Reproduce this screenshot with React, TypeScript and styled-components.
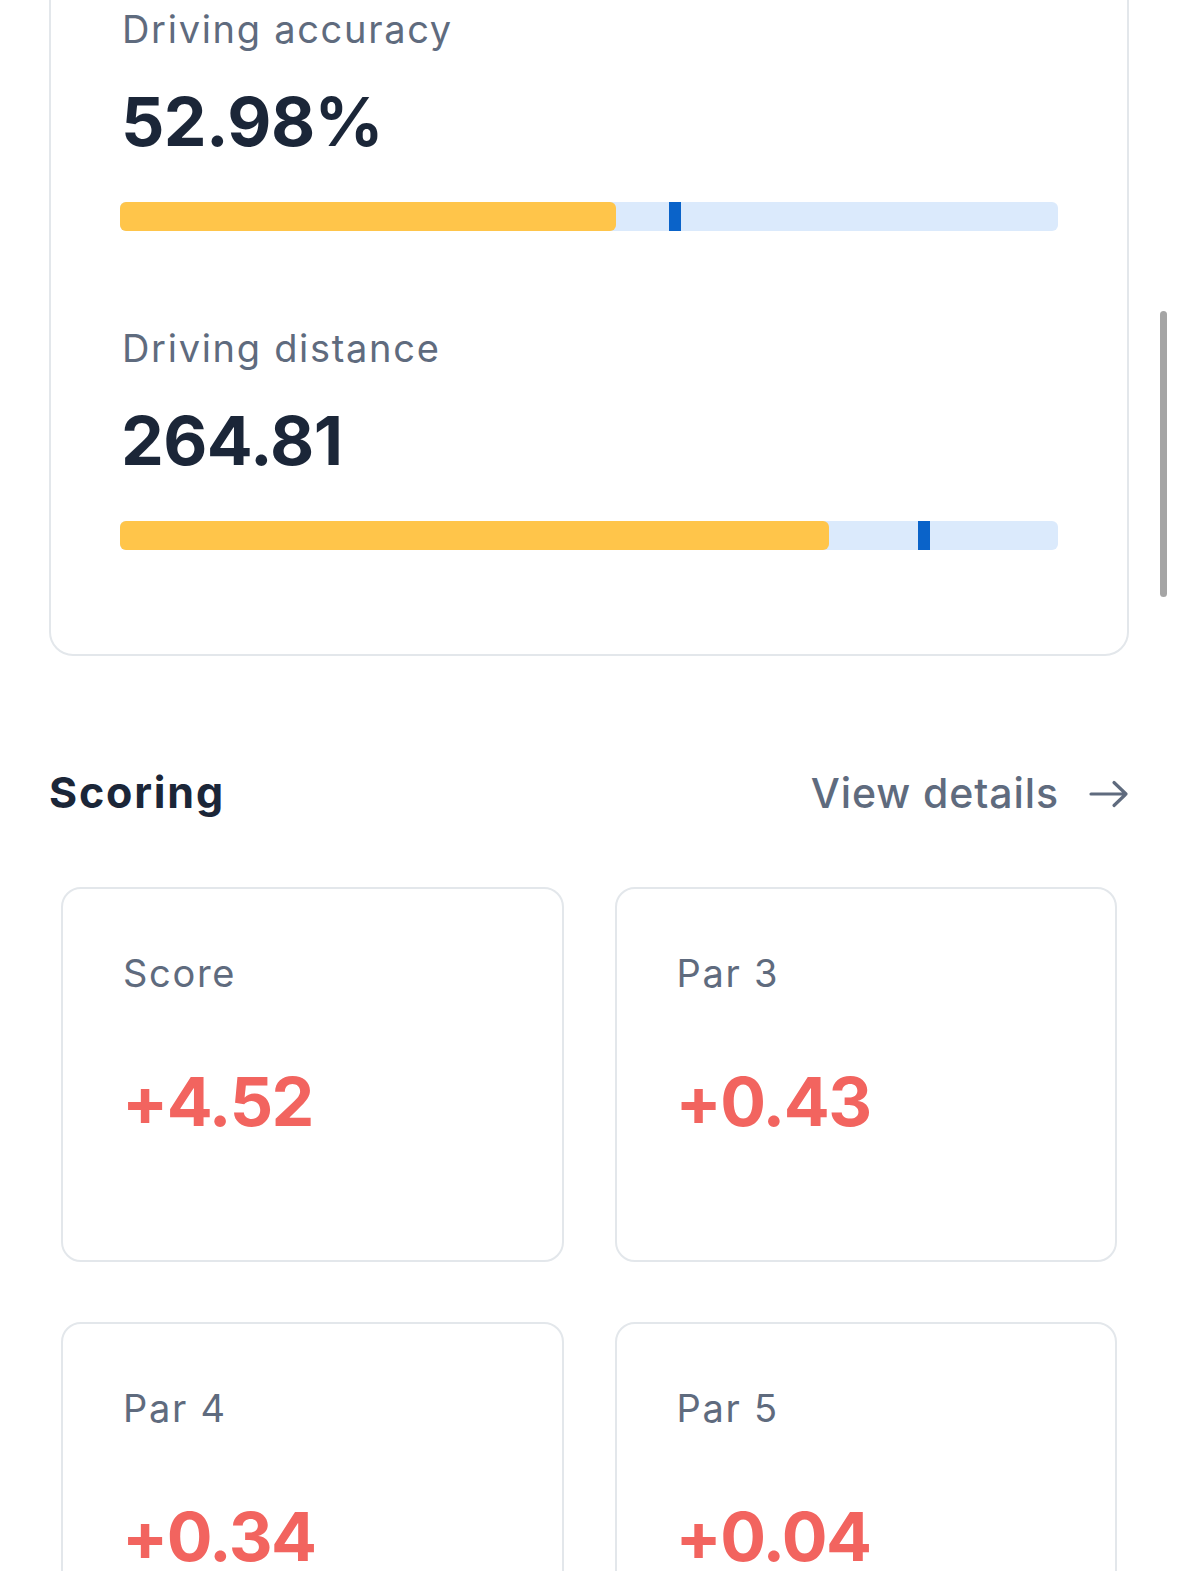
import React from 'react';
import styled, { createGlobalStyle } from 'styled-components';

const GlobalStyle = createGlobalStyle`
    html, body {
        margin: 0;
        padding: 0;
        background: #ffffff;
        font-family: Inter, 'Open Sans', 'Liberation Sans', sans-serif;
        color: #1b2638;
        overflow: hidden;
    }
`;

const Page = styled.div`
    padding: 0 50px 0 49px;
    height: 1571px;
    overflow: hidden;
`;

const StatsCard = styled.section`
    margin-top: -56px;
    border: 2px solid #e3e7eb;
    border-radius: 24px;
    padding: 60px 69px 104px;
    display: flex;
    flex-direction: column;
    gap: 94px;
`;

const Stat = styled.div`
    display: flex;
    flex-direction: column;
`;

const Label = styled.div`
    font-size: 38px;
    line-height: 46px;
    color: #5f6b7e;
    padding-left: 2px;
    letter-spacing: 1.7px;
`;

const BigValue = styled.div<{ $tone?: 'dark' | 'red' }>`
    margin-top: 28px;
    font-size: 68px;
    line-height: 82px;
    font-weight: 700;
    padding-left: 1px;
    letter-spacing: ${(p) => (p.$tone === 'red' ? '-1.5px' : '-0.6px')};
    color: ${(p) => (p.$tone === 'red' ? '#f2645f' : '#1b2638')};
`;

const Track = styled.div`
    position: relative;
    margin-top: 40px;
    height: 29px;
    border-radius: 6px;
    background: #dbeafc;
`;

const Fill = styled.div`
    height: 100%;
    border-radius: 6px;
    background: #ffc54a;
`;

const Marker = styled.div`
    position: absolute;
    top: 0;
    bottom: 0;
    width: 12px;
    background: #0a63c9;
`;

const SectionHeader = styled.div`
    margin-top: 111px;
    display: flex;
    align-items: baseline;
    justify-content: space-between;
`;

const SectionTitle = styled.h2`
    margin: 0;
    font-size: 43px;
    line-height: 51px;
    font-weight: 700;
    color: #1b2638;
    letter-spacing: 1.8px;
`;

const DetailsLink = styled.a`
    display: flex;
    align-items: center;
    gap: 30px;
    font-size: 41px;
    line-height: 51px;
    font-weight: 500;
    color: #5f6b7e;
    text-decoration: none;
    letter-spacing: 0.9px;
`;

const Grid = styled.div`
    margin-top: 68px;
    padding: 0 12px;
    display: grid;
    grid-template-columns: 1fr 1fr;
    gap: 60px 51px;
`;

const ScoreCard = styled.div`
    border: 2px solid #e3e7eb;
    border-radius: 20px;
    padding: 61px 58px 118px;
    display: flex;
    flex-direction: column;
`;

const ScoreValue = styled(BigValue)`
    margin-top: 64px;
`;

const stats = [
    { label: 'Driving accuracy', value: '52.98%', fill: 52.9, marker: 58.5 },
    { label: 'Driving distance', value: '264.81', fill: 75.6, marker: 85.1 },
];

const scores = [
    { label: 'Score', value: '+4.52' },
    { label: 'Par 3', value: '+0.43' },
    { label: 'Par 4', value: '+0.34' },
    { label: 'Par 5', value: '+0.04' },
];

const ScrollThumb = styled.div`
    position: fixed;
    right: 12px;
    top: 311px;
    width: 7px;
    height: 286px;
    border-radius: 4px;
    background: #a5a5a5;
`;

function ArrowRight() {
    return (
        <svg width='40' height='28' viewBox='0 0 40 28' fill='none'>
            <path
                d='M2 14H37M25 2.5L37 14L25 25.5'
                stroke='#5f6b7e'
                strokeWidth='3.2'
                strokeLinecap='round'
                strokeLinejoin='round'
            />
        </svg>
    );
}

export default function App() {
    return (
        <Page>
            <GlobalStyle />
            <StatsCard>
                {stats.map((s) => (
                    <Stat key={s.label}>
                        <Label>{s.label}</Label>
                        <BigValue>{s.value}</BigValue>
                        <Track>
                            <Fill style={{ width: `${s.fill}%` }} />
                            <Marker style={{ left: `${s.marker}%` }} />
                        </Track>
                    </Stat>
                ))}
            </StatsCard>

            <SectionHeader>
                <SectionTitle>Scoring</SectionTitle>
                <DetailsLink href='#'>
                    View details
                    <ArrowRight />
                </DetailsLink>
            </SectionHeader>

            <Grid>
                {scores.map((s) => (
                    <ScoreCard key={s.label}>
                        <Label>{s.label}</Label>
                        <ScoreValue $tone='red'>{s.value}</ScoreValue>
                    </ScoreCard>
                ))}
            </Grid>
            <ScrollThumb />
        </Page>
    );
}
